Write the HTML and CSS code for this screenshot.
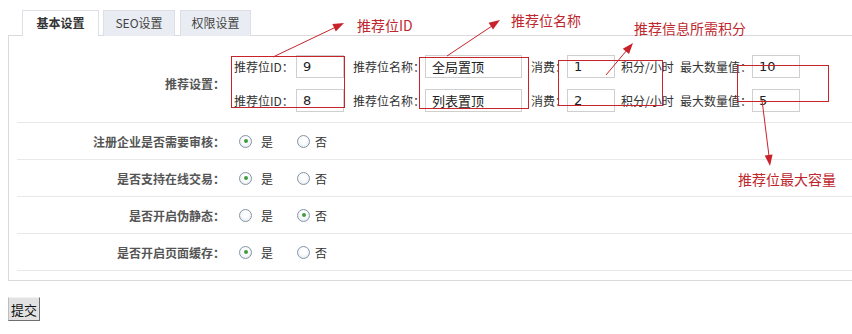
FILE: index.html
```html
<!DOCTYPE html>
<html lang="zh-CN">
<head>
    <meta charset="UTF-8">
    <title>基本设置</title>
    <link rel="stylesheet" href="styles.css">
</head>
<body>
    <div class="page">
        <ul class="tabs">
            <li class="tab active">基本设置</li>
            <li class="tab">SEO设置</li>
            <li class="tab">权限设置</li>
        </ul>

        <div class="panel">
            <div class="row row-tall">
                <div class="row-label">推荐设置：</div>
                <div class="row-body fields">
                    <label>推荐位ID：</label><input class="inp" value="9">
                    <label class="pad">推荐位名称：</label><input class="inp" value="全局置顶">
                    <label class="pad">消费：</label><input class="inp" value="1">
                    <span class="unit">积分/小时</span>
                    <label>最大数量值：</label><input class="inp" value="10">

                    <label>推荐位ID：</label><input class="inp" value="8">
                    <label class="pad">推荐位名称：</label><input class="inp" value="列表置顶">
                    <label class="pad">消费：</label><input class="inp" value="2">
                    <span class="unit">积分/小时</span>
                    <label>最大数量值：</label><input class="inp" value="5">
                </div>
            </div>

            <div class="row">
                <div class="row-label">注册企业是否需要审核：</div>
                <div class="row-body radios">
                    <input type="radio" name="audit" checked><span class="yes">是</span>
                    <input type="radio" name="audit"><span>否</span>
                </div>
            </div>

            <div class="row">
                <div class="row-label">是否支持在线交易：</div>
                <div class="row-body radios">
                    <input type="radio" name="trade" checked><span class="yes">是</span>
                    <input type="radio" name="trade"><span>否</span>
                </div>
            </div>

            <div class="row">
                <div class="row-label">是否开启伪静态：</div>
                <div class="row-body radios">
                    <input type="radio" name="rewrite"><span class="yes">是</span>
                    <input type="radio" name="rewrite" checked><span>否</span>
                </div>
            </div>

            <div class="row">
                <div class="row-label">是否开启页面缓存：</div>
                <div class="row-body radios">
                    <input type="radio" name="cache" checked><span class="yes">是</span>
                    <input type="radio" name="cache"><span>否</span>
                </div>
            </div>
        </div>

        <button class="submit">提交</button>

        <!-- 标注层 -->
        <div class="notes">
            <svg class="notes-svg" width="852" height="334" viewBox="0 0 852 334">
                <g fill="none" stroke="#c8232b" stroke-width="1">
                    <rect x="231.5" y="56.5" width="113" height="51"/>
                    <rect x="419.5" y="57.5" width="109" height="51"/>
                    <rect x="558.5" y="60.5" width="104" height="45"/>
                    <rect x="737.5" y="65.5" width="91" height="36"/>
                    <line x1="273" y1="57" x2="336" y2="27"/>
                    <line x1="447" y1="56" x2="492" y2="26"/>
                    <line x1="606" y1="75" x2="627" y2="50"/>
                    <line x1="762" y1="100" x2="769" y2="156"/>
                </g>
                <g fill="#c8232b">
                    <polygon points="344,23 335.8,31.4 332.4,24.1"/>
                    <polygon points="500,20 493,29.4 488.6,22.8"/>
                    <polygon points="633,43 629,54 622.8,48.8"/>
                    <polygon points="770,166 772.6,154.6 764.7,155.6"/>
                </g>
            </svg>
            <span class="note note-id">推荐位ID</span>
            <span class="note note-name">推荐位名称</span>
            <span class="note note-cost">推荐信息所需积分</span>
            <span class="note note-max">推荐位最大容量</span>
        </div>
    </div>
</body>
</html>
```

FILE: styles.css
```css
* {
    margin: 0;
    padding: 0;
    box-sizing: border-box;
}

body {
    font-family: "Noto Sans CJK SC", "Liberation Sans", sans-serif;
    font-size: 12px;
    color: #333;
    background: #fff;
    overflow: hidden;
}

.page {
    position: relative;
    width: 852px;
    height: 334px;
    padding: 10px 0 0 8px;
}

/* tabs */
.tabs {
    list-style: none;
    display: flex;
    margin-left: 14px;
    position: relative;
    z-index: 1;
}

.tab {
    height: 26px;
    line-height: 24px;
    text-align: center;
    border: 1px solid #dcdfe4;
    border-bottom: none;
    background: #e9edf3;
    color: #444;
    margin-right: 5px;
}

.tab:nth-child(1) { width: 77px; margin-right: 4px; }
.tab:nth-child(2) { width: 72px; }
.tab:nth-child(3) { width: 71px; }

.tab.active {
    background: #fff;
    font-weight: bold;
    color: #333;
}

/* panel */
.panel {
    margin-top: -1px;
    margin-right: -20px;
    border: 1px solid #dadada;
    padding-bottom: 9px;
}

.row {
    display: flex;
    align-items: center;
    height: 37px;
    margin-left: 8px;
    border-bottom: 1px solid #e8e8e8;
}

.row-tall {
    height: auto;
    padding: 19px 0 10px;
}

.row-label {
    width: 217px;
    padding-right: 9px;
    text-align: right;
    font-weight: bold;
    color: #555;
    white-space: nowrap;
}

.fields {
    display: grid;
    grid-template-columns: 62px 48px 81px 97px 45px 48px 65px 72px 48px;
    grid-auto-rows: 23px;
    row-gap: 11px;
    align-items: center;
}

.fields label,
.fields .unit {
    white-space: nowrap;
    color: #333;
}

.fields .pad {
    padding-left: 9px;
}

.fields .unit {
    padding-left: 6px;
}

.inp {
    width: 100%;
    height: 23px;
    border: 1px solid #cfcfcf;
    padding-left: 6px;
    font-family: "DejaVu Sans", "Noto Sans CJK SC", sans-serif;
    font-size: 13px;
    color: #222;
    outline: none;
}

.inp[value="全局置顶"],
.inp[value="列表置顶"] {
    font-family: "Noto Sans CJK SC", sans-serif;
}

/* radios */
.radios {
    display: flex;
    align-items: center;
    padding-left: 5px;
}

.radios input {
    appearance: none;
    -webkit-appearance: none;
    width: 13px;
    height: 13px;
    border: 1px solid #8495a8;
    border-radius: 50%;
    background: radial-gradient(circle at 50% 40%, #fff 30%, #dfe5ea 100%);
    position: relative;
}

.radios input:checked::after {
    content: "";
    position: absolute;
    left: 3.5px;
    top: 3.5px;
    width: 4px;
    height: 4px;
    border-radius: 50%;
    background: #3f9c3f;
}

.radios span {
    margin-left: 9px;
    color: #333;
}

.radios span.yes {
    margin-right: 24px;
}

.radios span:not(.yes) {
    margin-left: 5px;
}

/* submit */
.submit {
    margin-top: 16px;
    width: 32px;
    height: 24px;
    font-family: "Noto Sans CJK SC", sans-serif;
    font-size: 13px;
    color: #111;
    background: #e2e2e2;
    border: 1px solid;
    border-color: #f2f2f2 #6e6e6e #6e6e6e #bdbdbd;
}

/* annotations */
.notes {
    position: absolute;
    left: 0;
    top: 0;
    width: 852px;
    height: 334px;
    pointer-events: none;
}

.notes-svg {
    position: absolute;
    left: 0;
    top: 0;
}

.note {
    position: absolute;
    font-size: 14px;
    line-height: 16px;
    color: #c0262d;
    white-space: nowrap;
}

.note-id { left: 357px; top: 17px; }
.note-name { left: 511px; top: 12px; }
.note-cost { left: 634px; top: 20px; }
.note-max { left: 738px; top: 171px; }
```
